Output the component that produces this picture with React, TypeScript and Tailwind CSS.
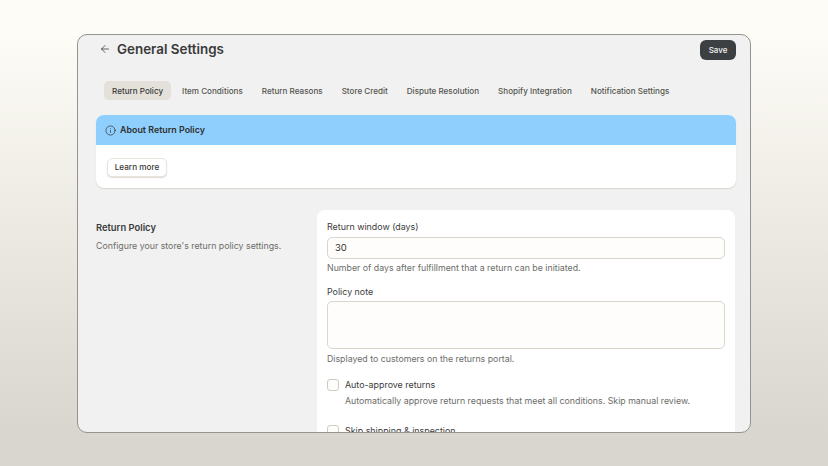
import { ArrowLeft, Info } from "lucide-react";

const tabs = [
  "Return Policy",
  "Item Conditions",
  "Return Reasons",
  "Store Credit",
  "Dispute Resolution",
  "Shopify Integration",
  "Notification Settings",
];

function CheckRow({ label, help }: { label: string; help?: string }) {
  return (
    <div className="flex gap-[6px]">
      <div className="mt-[1px] h-[12px] w-[12px] shrink-0 rounded-[3px] border border-[#cfccc2] bg-[#fdfdfb]" />
      <div>
        <p className="text-[8.9px] leading-[14px] text-[#3c3c3a]">{label}</p>
        {help && <p className="mt-[2px] text-[8.8px] leading-[14px] text-[#6d6d69]">{help}</p>}
      </div>
    </div>
  );
}

export default function App() {
  return (
    <div className="flex h-[466px] w-[828px] justify-center overflow-hidden bg-gradient-to-b from-[#fefcf6] from-[7%] to-[#d9d6cf] to-[93%] pt-[34px] font-['Inter',sans-serif]">
      <div className="h-[399px] w-[674px] overflow-hidden rounded-[10px] border border-[#94948e] bg-[#f1f1f1] pl-[18px] pr-[14px]">
        {/* Encabezado */}
        <div className="flex items-start justify-between pt-[5px]">
          <div className="flex items-center gap-[6px] pl-[3px]">
            <ArrowLeft size={12} strokeWidth={1.5} className="text-[#333]" />
            <h1 className="text-[13.4px] leading-[18px] font-semibold text-[#3a3a3a]">General Settings</h1>
          </div>
          <button className="h-[20px] w-[36px] rounded-[6px] bg-[#3d4042] text-[8px] font-medium text-[#f2f2f2]">
            Save
          </button>
        </div>

        {/* Tabs */}
        <div className="mt-[21px] flex gap-[3px] pl-[8px]">
          {tabs.map((tab, i) => (
            <div
              key={tab}
              className={`h-[19px] rounded-[5px] px-[8px] text-[8.1px] leading-[20px] font-medium whitespace-nowrap ${
                i === 0 ? "bg-[#e3e1da] text-[#3a3a3a]" : "text-[#55554f]"
              }`}
            >
              {tab}
            </div>
          ))}
        </div>

        {/* Banner */}
        <div className="mt-[15px] overflow-hidden rounded-[8px] bg-white shadow-[0_1px_1px_#d8d6ce]">
          <div className="flex h-[30px] items-center gap-[4px] bg-[#8fcffd] pl-[9px]">
            <Info size={11} strokeWidth={1.5} className="text-[#303030]" />
            <span className="text-[8.9px] font-semibold text-[#303030]">About Return Policy</span>
          </div>
          <div className="h-[43px] pl-[11px] pt-[13px]">
            <button className="block h-[19px] w-[60px] rounded-[5px] border border-[#e6e4dd] bg-white text-[8.2px] font-medium text-[#3a3a3a] shadow-[0_1px_1px_#dddbd3]">
              Learn more
            </button>
          </div>
        </div>

        {/* Return Policy */}
        <div className="mt-[22px] flex pr-[1px]">
          <div className="w-[221px] shrink-0 pt-[10px]">
            <h2 className="text-[9.4px] leading-[15px] font-semibold text-[#3a3a3a]">Return Policy</h2>
            <p className="mt-[4px] text-[8.8px] leading-[14px] text-[#6d6d69]">Configure your store's return policy settings.</p>
          </div>
          <div className="h-[260px] flex-1 rounded-[8px] bg-white px-[10px] pt-[10px]">
            <label className="block text-[8.9px] leading-[14px] text-[#3c3c3a]">Return window (days)</label>
            <div className="mt-[3px] flex h-[22px] items-center rounded-[5px] border border-[#d9d6cb] bg-[#fefdfb] pl-[7px] text-[9.5px] text-[#333]">
              30
            </div>
            <p className="mt-[2px] text-[8.8px] leading-[14px] text-[#6d6d69]">Number of days after fulfillment that a return can be initiated.</p>

            <label className="mt-[10px] block text-[8.9px] leading-[14px] text-[#3c3c3a]">Policy note</label>
            <div className="mt-[2px] h-[48px] rounded-[5px] border border-[#d9d6cb] bg-[#fefdfb]" />
            <p className="mt-[3px] text-[8.8px] leading-[14px] text-[#6d6d69]">Displayed to customers on the returns portal.</p>

            <div className="mt-[12px] flex flex-col gap-[16px]">
              <CheckRow
                label="Auto-approve returns"
                help="Automatically approve return requests that meet all conditions. Skip manual review."
              />
              <CheckRow label="Skip shipping & inspection" />
            </div>
          </div>
        </div>
      </div>
    </div>
  );
}
